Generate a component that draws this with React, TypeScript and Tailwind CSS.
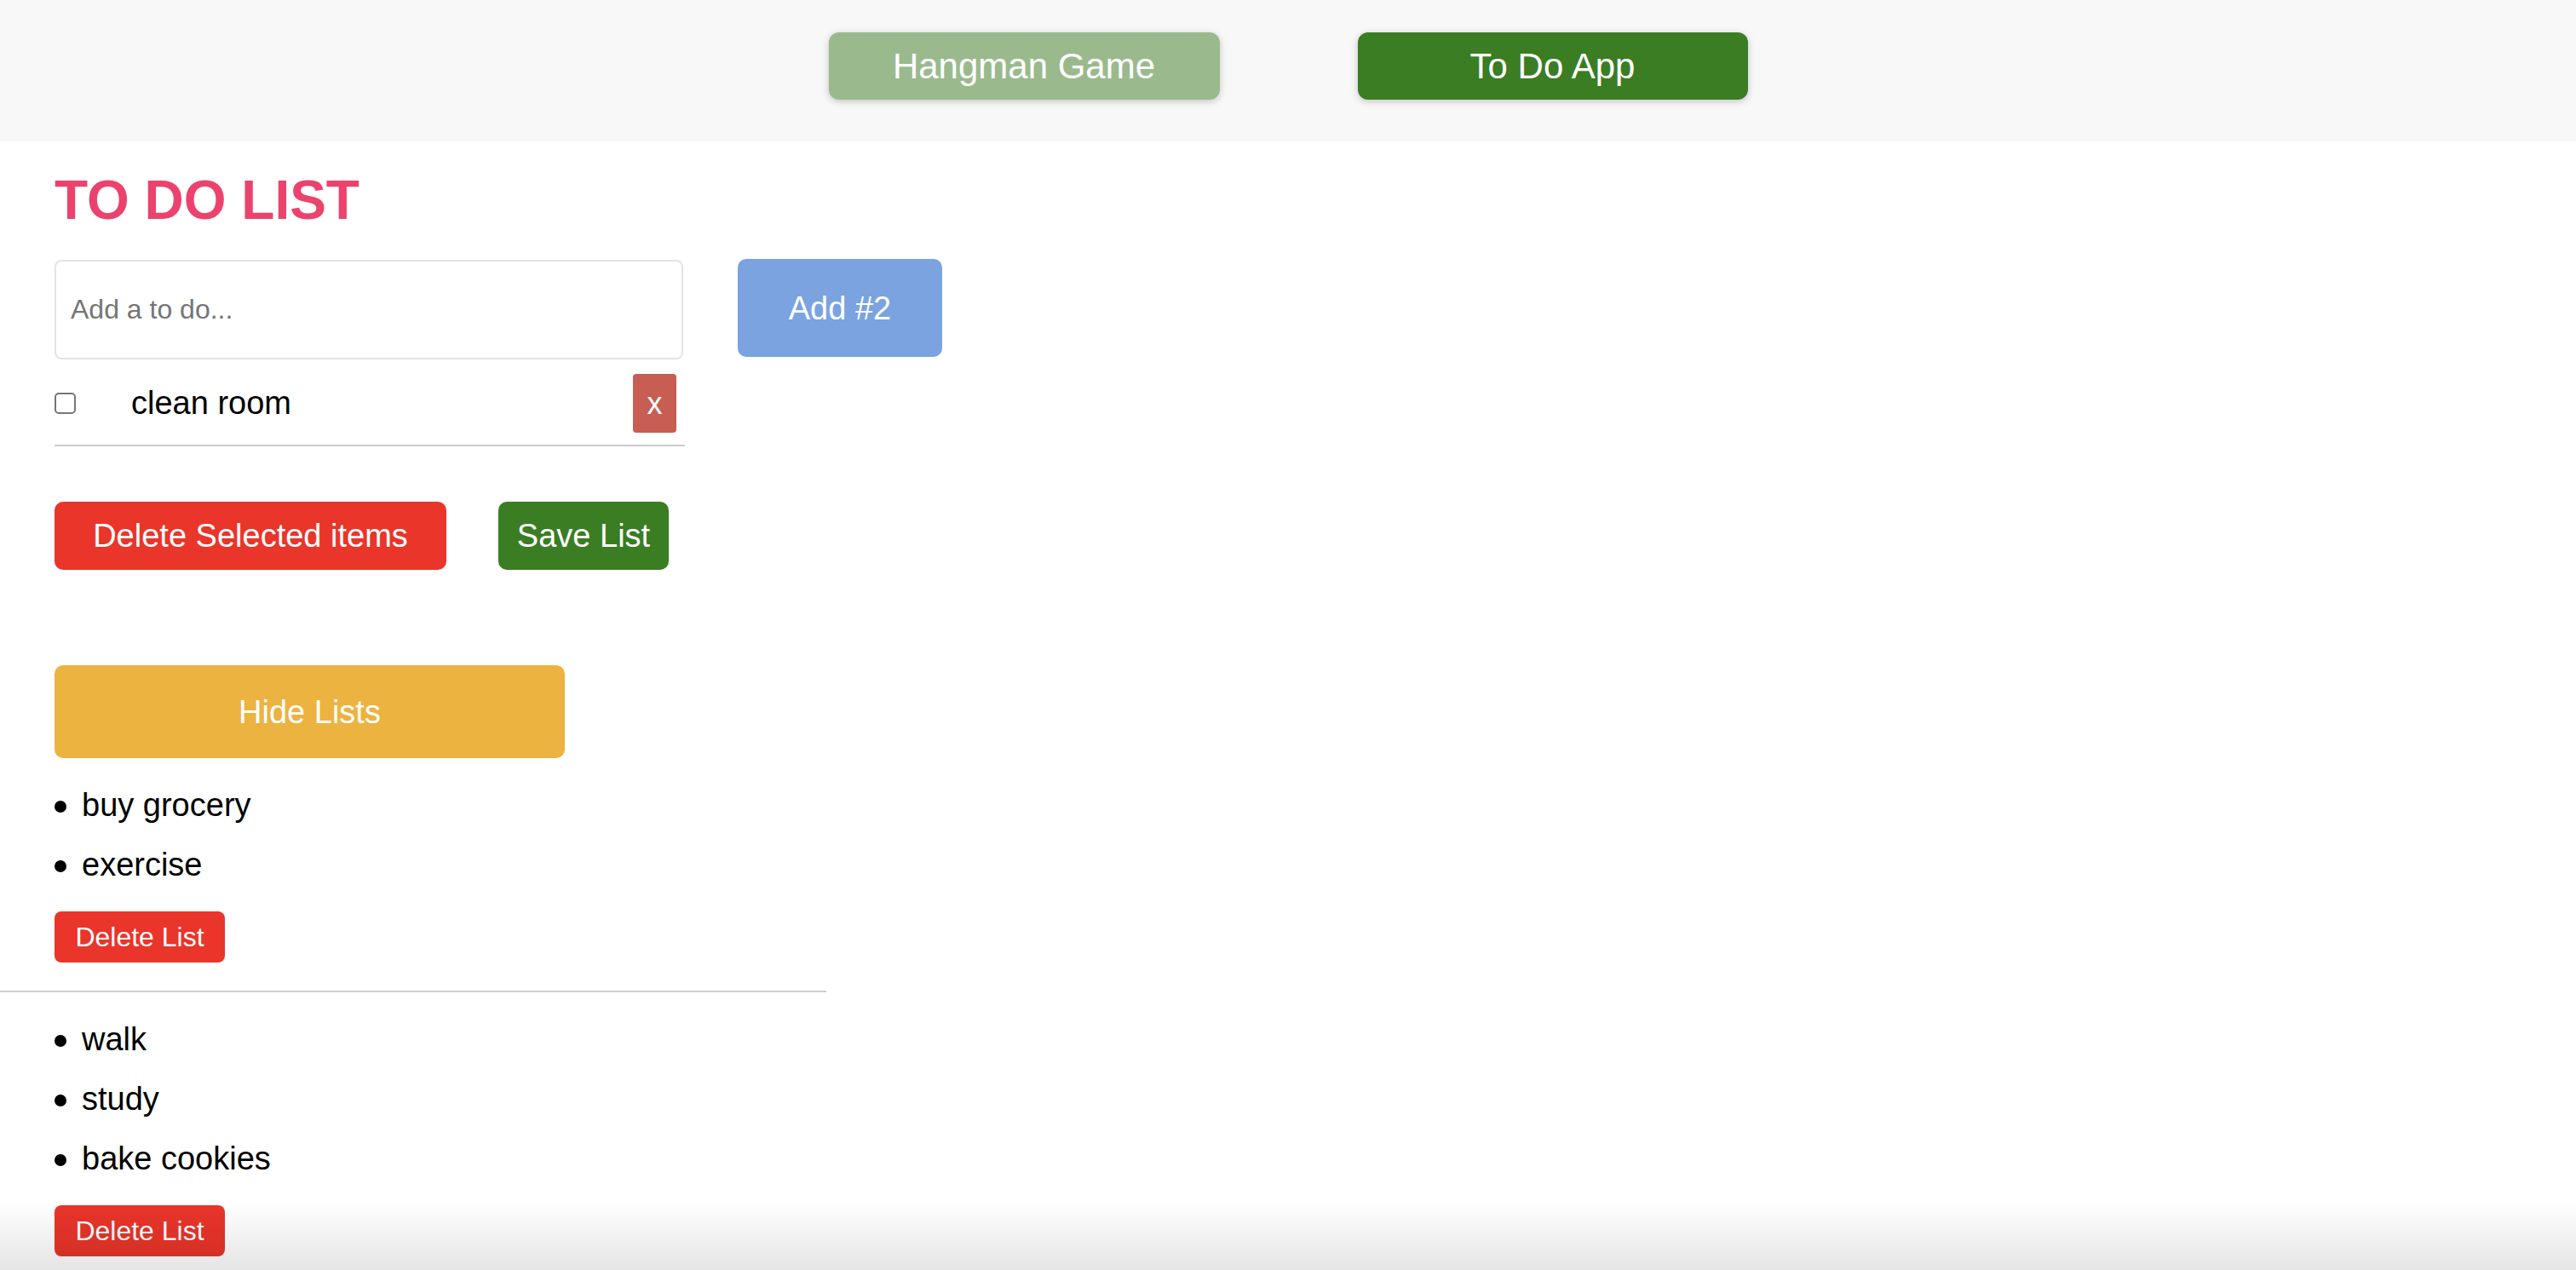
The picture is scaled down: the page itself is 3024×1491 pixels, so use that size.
import React from "react";

function ListBlock({ items }: { items: string[] }) {
  return (
    <div className="flex flex-col pl-[64px]">
      <ul className="mt-[20px] flex flex-col">
        {items.map((t) => (
          <li key={t} className="h-[70px] flex items-center text-[38px] text-black">
            <span className="w-[14px] h-[14px] rounded-full bg-black mr-[18px] mt-[4px]" />
            <span>{t}</span>
          </li>
        ))}
      </ul>
      <button className="mt-[20px] w-[200px] h-[60px] rounded-[8px] bg-[#e9352a] text-white text-[32px] leading-none">
        Delete List
      </button>
    </div>
  );
}

export default function App() {
  return (
    <div className="min-h-screen bg-white font-['Liberation_Sans',Arial,sans-serif] relative">
      <header className="h-[166px] bg-[#f8f8f8] flex justify-center items-start pt-[38px] gap-[162px]">
        <button className="w-[459px] h-[79px] rounded-[12px] bg-[#9aba8d] text-white text-[42px] leading-none shadow-[0_2px_8px_rgba(0,0,0,0.22)]">
          Hangman Game
        </button>
        <button className="w-[458px] h-[79px] rounded-[12px] bg-[#3a7d23] text-white text-[42px] leading-none shadow-[0_2px_8px_rgba(0,0,0,0.22)]">
          To Do App
        </button>
      </header>

      <main className="flex flex-col">
        <h1 className="mt-[32px] ml-[64px] text-[64px] leading-[74px] font-bold text-[#eb436d]">TO DO LIST</h1>

        <div className="mt-[33px] ml-[64px] flex items-start gap-[62px]">
          <div className="w-[740px] flex flex-col">
            <input
              placeholder="Add a to do..."
              className="w-[738px] h-[117px] border-2 border-[#e4e4e4] rounded-[8px] pl-[17px] text-[32px] text-black placeholder:text-[#757575] outline-none"
            />
            <div className="pt-[17px] pb-[14px] border-b-2 border-[#cccccc]">
              <div className="h-[69px] flex items-center">
                <input
                  type="checkbox"
                  className="appearance-none w-[25px] h-[25px] border-2 border-[#767676] rounded-[5px] bg-white"
                />
                <span className="ml-[65px] text-[38px] text-black">clean room</span>
                <button className="ml-auto mr-[10px] w-[51px] h-[69px] rounded-[4px] bg-[#c75d53] text-white text-[36px] leading-none">
                  x
                </button>
              </div>
            </div>
          </div>
          <button className="mt-[-1px] w-[240px] h-[115px] rounded-[10px] bg-[#7aa3e0] text-white text-[38px] leading-none">
            Add #2
          </button>
        </div>

        <div className="mt-[65px] ml-[64px] flex items-center gap-[61px]">
          <button className="w-[460px] h-[80px] rounded-[10px] bg-[#e9352a] text-white text-[38px] leading-none">
            Delete Selected items
          </button>
          <button className="w-[200px] h-[80px] rounded-[10px] bg-[#3a7d23] text-white text-[38px] leading-none">
            Save List
          </button>
        </div>

        <div className="mt-[112px] ml-[64px]">
          <button className="w-[599px] h-[109px] rounded-[10px] bg-[#ecb341] text-white text-[38px] leading-none">
            Hide Lists
          </button>
        </div>

        <ListBlock items={["buy grocery", "exercise"]} />
        <div className="mt-[33px] w-[970px] border-t-2 border-[#cccccc]" />
        <ListBlock items={["walk", "study", "bake cookies"]} />
      </main>

      <div className="pointer-events-none fixed bottom-0 left-0 right-0 h-[80px] bg-[linear-gradient(to_bottom,rgba(0,0,0,0),rgba(0,0,0,0.1))]" />
    </div>
  );
}
